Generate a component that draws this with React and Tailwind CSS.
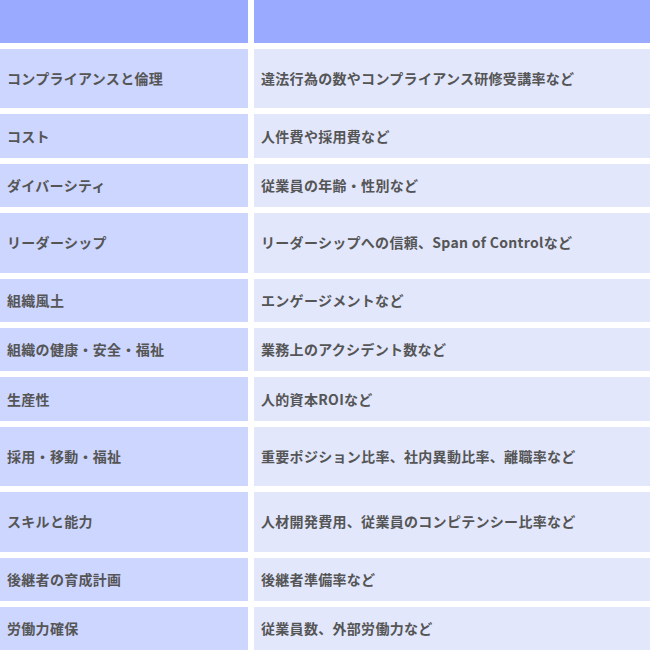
import React from 'react'

const rows = [
  ['コンプライアンスと倫理', '違法行為の数やコンプライアンス研修受講率など', true],
  ['コスト', '人件費や採用費など', false],
  ['ダイバーシティ', '従業員の年齢・性別など', false],
  ['リーダーシップ', 'リーダーシップへの信頼、Span of Controlなど', true],
  ['組織風土', 'エンゲージメントなど', false],
  ['組織の健康・安全・福祉', '業務上のアクシデント数など', false],
  ['生産性', '人的資本ROIなど', false],
  ['採用・移動・福祉', '重要ポジション比率、社内異動比率、離職率など', true],
  ['スキルと能力', '人材開発費用、従業員のコンピテンシー比率など', true],
  ['後継者の育成計画', '後継者準備率など', false],
  ['労働力確保', '従業員数、外部労働力など', false],
]

export default function App() {
  return (
    <div
      className="w-[650px] h-[650px] overflow-hidden bg-white"
      style={{ fontFamily: '"Noto Sans CJK JP", "Noto Sans", sans-serif' }}
    >
      <div className="grid grid-cols-[248px_1fr] gap-[6px] text-[14px] font-bold tracking-[0.3px] text-[#555555]">
        <div className="h-[43px] bg-[#9aabff]" />
        <div className="h-[43px] bg-[#9aabff]" />
        {rows.map(([label, value, tall]) => (
          <React.Fragment key={label}>
            <div
              className={`flex items-center px-[7px] bg-[#cdd6ff] ${tall ? 'h-[59.4px]' : 'h-[43.4px]'}`}
            >
              {label}
            </div>
            <div
              className={`flex items-center px-[7px] bg-[#e2e7fc] ${tall ? 'h-[59.4px]' : 'h-[43.4px]'}`}
            >
              {value}
            </div>
          </React.Fragment>
        ))}
      </div>
    </div>
  )
}
